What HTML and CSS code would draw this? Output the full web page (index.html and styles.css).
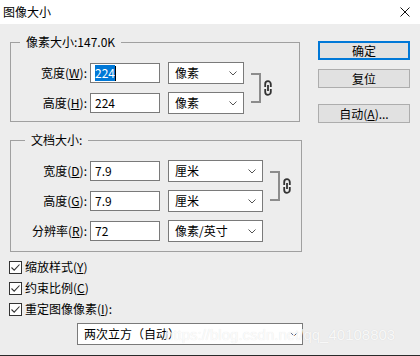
FILE: index.html
```html
<html>
<head>
<meta charset="utf-8" />
<title>图像大小</title>
<link rel="stylesheet" href="styles.css">
</head>
<body>
<div class="window">
	<div class="titlebar">
		<span class="title">图像大小</span>
		<svg class="close" width="10" height="10" viewBox="0 0 10 10"><path d="M0.5 0.5 L9.5 9.5 M9.5 0.5 L0.5 9.5" stroke="#111" stroke-width="1" fill="none"/></svg>
	</div>
	<div class="dialog">
		<div class="main">
			<fieldset class="group group-pixel">
				<legend>像素大小:147.0K</legend>
				<div class="fields">
					<div class="rows">
						<div class="row">
							<label>宽度(<u>W</u>):</label>
							<div class="field"><span class="selected">224</span><span class="caret"></span></div>
							<div class="select">像素<svg class="arrow" width="8" height="5" viewBox="0 0 8 5"><polyline points="0.5,0.5 4,4 7.5,0.5" stroke="#555" fill="none"/></svg></div>
						</div>
						<div class="row">
							<label>高度(<u>H</u>):</label>
							<div class="field">224</div>
							<div class="select">像素<svg class="arrow" width="8" height="5" viewBox="0 0 8 5"><polyline points="0.5,0.5 4,4 7.5,0.5" stroke="#555" fill="none"/></svg></div>
						</div>
					</div>
					<div class="link">
						<div class="bracket"></div>
						<svg class="chain" width="8" height="16" viewBox="0 0 8 16"><path d="M1.2 7 V4 A2.8 2.8 0 0 1 6.8 4 V7 M1.2 9 V12 A2.8 2.8 0 0 0 6.8 12 V9 M4 5 V11" stroke="#333" stroke-width="1.8" fill="none"/></svg>
					</div>
				</div>
			</fieldset>

			<fieldset class="group group-doc">
				<legend>文档大小:</legend>
				<div class="fields">
					<div class="rows">
						<div class="row">
							<label>宽度(<u>D</u>):</label>
							<div class="field">7.9</div>
							<div class="select wide">厘米<svg class="arrow" width="8" height="5" viewBox="0 0 8 5"><polyline points="0.5,0.5 4,4 7.5,0.5" stroke="#555" fill="none"/></svg></div>
						</div>
						<div class="row">
							<label>高度(<u>G</u>):</label>
							<div class="field">7.9</div>
							<div class="select wide">厘米<svg class="arrow" width="8" height="5" viewBox="0 0 8 5"><polyline points="0.5,0.5 4,4 7.5,0.5" stroke="#555" fill="none"/></svg></div>
						</div>
						<div class="row">
							<label>分辨率(<u>R</u>):</label>
							<div class="field">72</div>
							<div class="select wide">像素/英寸<svg class="arrow" width="8" height="5" viewBox="0 0 8 5"><polyline points="0.5,0.5 4,4 7.5,0.5" stroke="#555" fill="none"/></svg></div>
						</div>
					</div>
					<div class="link">
						<div class="bracket"></div>
						<svg class="chain" width="8" height="16" viewBox="0 0 8 16"><path d="M1.2 7 V4 A2.8 2.8 0 0 1 6.8 4 V7 M1.2 9 V12 A2.8 2.8 0 0 0 6.8 12 V9 M4 5 V11" stroke="#333" stroke-width="1.8" fill="none"/></svg>
					</div>
				</div>
			</fieldset>

			<div class="checks">
				<div class="check"><span class="box"><svg width="11" height="11" viewBox="0 0 11 11"><polyline points="1.5,5.5 4.2,8.2 9.5,2.5" stroke="#333" stroke-width="1.1" fill="none"/></svg></span>缩放样式(<u>Y</u>)</div>
				<div class="check"><span class="box"><svg width="11" height="11" viewBox="0 0 11 11"><polyline points="1.5,5.5 4.2,8.2 9.5,2.5" stroke="#333" stroke-width="1.1" fill="none"/></svg></span>约束比例(<u>C</u>)</div>
				<div class="check"><span class="box"><svg width="11" height="11" viewBox="0 0 11 11"><polyline points="1.5,5.5 4.2,8.2 9.5,2.5" stroke="#333" stroke-width="1.1" fill="none"/></svg></span>重定图像像素(<u>I</u>):</div>
			</div>

			<div class="select resample">两次立方（自动）<svg class="arrow" width="8" height="5" viewBox="0 0 8 5"><polyline points="0.5,0.5 4,4 7.5,0.5" stroke="#555" fill="none"/></svg></div>
		</div>

		<div class="buttons">
			<div class="btn default">确定</div>
			<div class="btn">复位</div>
			<div class="btn auto">自动(<u>A</u>)...</div>
		</div>
	</div>
	<div class="watermark">https://blog.csdn.net/qq_40108803</div>
</div>
</body>
</html>
```

FILE: styles.css
```css
*{
	box-sizing: border-box;
}

body{
	margin: 0;
	font-family: "Noto Sans CJK SC", sans-serif;
	font-size: 12px;
	color: #000;
}

.window{
	position: relative;
	width: 420px;
	height: 356px;
	background: #ededed;
	border-bottom: 1px solid #2a2a2a;
	overflow: hidden;
}

.titlebar{
	height: 24px;
	background: #fff;
	display: flex;
	align-items: center;
	justify-content: space-between;
	padding: 0 10px 0 3px;
}

.title{
	line-height: 16px;
}

.dialog{
	display: flex;
	padding: 10px 0 0 10px;
}

.main{
	width: 292px;
}

.group{
	margin: 0;
	padding: 12px 0 7px 0;
	border: 1px solid #a0a0a0;
	min-width: 0;
}

.group legend{
	padding: 0 6px;
	line-height: 16px;
}

.group-pixel{
	width: 290px;
}

.group-pixel legend{
	margin-left: 9px;
}

.group-doc{
	width: 292px;
	margin-top: 10px;
	padding-bottom: 9px;
}

.group-doc legend{
	margin-left: 14px;
}

.fields{
	display: flex;
}

.row{
	display: flex;
	align-items: center;
	height: 22px;
}

.row + .row{
	margin-top: 8px;
}

.row label{
	width: 76px;
	margin-right: 3px;
	text-align: right;
	white-space: nowrap;
	line-height: 16px;
}

.field{
	display: flex;
	align-items: center;
	width: 70px;
	height: 20px;
	border: 1px solid #7a7a7a;
	background: #fff;
	padding-left: 4px;
	line-height: 16px;
}

.selected{
	background: #0078d7;
	color: #fff;
	line-height: 16px;
}

.caret{
	width: 1px;
	height: 15px;
	background: #000;
}

.select{
	display: flex;
	align-items: center;
	justify-content: space-between;
	margin-left: 8px;
	width: 76px;
	height: 22px;
	border: 1px solid #7a7a7a;
	background: #fff;
	padding: 0 6px 0 6px;
	line-height: 16px;
}

.select.wide{
	width: 95px;
}

.link{
	display: flex;
	align-items: center;
	align-self: flex-start;
	margin-top: 11px;
	margin-left: 7px;
}

.bracket{
	width: 10px;
	height: 30px;
	border: 2px solid #8c8c8c;
	border-left: none;
}

.chain{
	margin-left: 3px;
}

.checks{
	margin-top: 5px;
}

.check{
	display: flex;
	align-items: center;
	height: 20px;
	margin-left: -1px;
	line-height: 16px;
}

.check + .check{
	margin-top: 1px;
}

.box{
	display: flex;
	width: 13px;
	height: 13px;
	border: 1px solid #333;
	background: #fff;
	margin-right: 3px;
}

.resample{
	margin: 4px 0 0 67px;
	width: 226px;
	padding-right: 4px;
}

.buttons{
	display: flex;
	flex-direction: column;
	margin-left: 16px;
	padding-top: 7px;
}

.btn{
	width: 92px;
	height: 19px;
	background: #e1e1e1;
	border: 1px solid #adadad;
	text-align: center;
	line-height: 17px;
	margin-top: 9px;
}

.btn.default{
	border: 2px solid #0078d7;
	line-height: 15px;
	margin-top: 0;
}

.btn.auto{
	margin-top: 16px;
}

.watermark{
	position: absolute;
	left: 165px;
	top: 326px;
	font-family: "Liberation Sans", sans-serif;
	font-size: 15px;
	line-height: 17px;
	color: rgba(255, 255, 255, 0.85);
	text-shadow: 0 0 1px rgba(0, 0, 0, 0.12);
}
```
